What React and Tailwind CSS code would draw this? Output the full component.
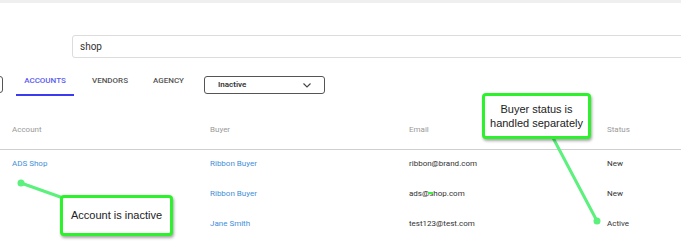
import React from "react";

const rows = [
  { account: "ADS Shop", buyer: "Ribbon Buyer", email: "ribbon@brand.com", status: "New" },
  { account: "", buyer: "Ribbon Buyer", email: "ads@shop.com", status: "New" },
  { account: "", buyer: "Jane Smith", email: "test123@test.com", status: "Active" },
];

const cols = "grid grid-cols-[198px_199px_198px_199px] w-[794px]";

const App = () => {
  return (
    <div className="relative w-[681px] h-[250px] overflow-hidden bg-white font-['Roboto',sans-serif]">
      {/* top strip */}
      <div className="h-[3px] bg-[#efefef]" />

      {/* search */}
      <div className="pt-[32px] pl-[72px]">
        <div className="flex items-center h-[23px] w-[700px] border border-[#dcdcdc] rounded-[3px] pl-[7px] text-[10px] text-[#333]">
          shop
        </div>
      </div>

      {/* tabs + filter */}
      <div className="flex items-start h-[21px] mt-[17px]">
        <div className="ml-[-17px] mt-[1px] w-[20px] h-[17px] border border-[#555] rounded-[3px]" />
        <div className="ml-[13px] w-[58px] h-[21px] border-b-[2px] border-[#3b3bf0] text-center text-[8px] font-medium leading-[12px] text-[#5a5cf0]">
          ACCOUNTS
        </div>
        <div className="ml-[18px] w-[61px] text-[8px] font-medium leading-[12px] text-[#555]">VENDORS</div>
        <div className="w-[51px] text-[8px] font-medium leading-[12px] text-[#555]">AGENCY</div>
        <div className="mt-[1px] flex items-center justify-between w-[121px] h-[18px] border border-[#555] rounded-[3px] pl-[13px] pr-[13px]">
          <span className="text-[8px] font-semibold text-[#333]">Inactive</span>
          <svg width="8" height="5" viewBox="0 0 8 5">
            <path d="M0.5 0.5 L4 4 L7.5 0.5" fill="none" stroke="#444" strokeWidth="1.1" />
          </svg>
        </div>
      </div>

      {/* table */}
      <div className="mt-[19px]">
        <div className={`${cols} h-[35px] border-b border-[#cfcfcf] text-[8px] text-[#9a9a9a] leading-[10px] pt-[10px]`}>
          <div className="pl-[12px]">Account</div>
          <div className="pl-[12px]">Buyer</div>
          <div className="pl-[12px]">Email</div>
          <div className="pl-[12px]">Status</div>
        </div>
        <div className="-mt-[1px]">
          {rows.map((r, i) => (
            <div key={i} className={`${cols} h-[30px] items-center text-[8px] leading-[10px]`}>
              <div className="pl-[12px] text-[#3f8fd8]">{r.account}</div>
              <div className="pl-[12px] text-[#3f8fd8]">{r.buyer}</div>
              <div className="pl-[12px] text-[#333]">{r.email}</div>
              <div className="pl-[12px] text-[#333]">{r.status}</div>
            </div>
          ))}
        </div>
      </div>

      {/* annotation pointers */}
      <svg className="absolute inset-0 pointer-events-none" width="681" height="250">
        <line x1="21" y1="183" x2="66" y2="199" stroke="#5cf07c" strokeWidth="3" strokeLinecap="round" />
        <circle cx="21" cy="183" r="3.5" fill="#5cf07c" />
        <line x1="551" y1="134" x2="597" y2="221" stroke="#5cf07c" strokeWidth="3" strokeLinecap="round" />
        <circle cx="597" cy="221" r="3.5" fill="#5cf07c" />
        <rect x="428" y="192" width="5" height="2" fill="#3cf04c" />
      </svg>

      {/* annotation boxes */}
      <div className="absolute left-[60px] top-[195px] w-[113px] h-[41px] flex items-center bg-white border-[3px] border-[#2cf22c] rounded-[4px] shadow-[1px_2px_3px_rgba(0,0,0,0.35)] pl-[8px] font-['Liberation_Sans',Arial,sans-serif] text-[11px] text-[#222]">
        Account is inactive
      </div>
      <div className="absolute left-[482px] top-[93px] w-[109px] h-[46px] flex items-center justify-center bg-white border-[3px] border-[#2cf22c] rounded-[4px] shadow-[1px_2px_3px_rgba(0,0,0,0.35)] text-center font-['Liberation_Sans',Arial,sans-serif] text-[11px] leading-[14px] text-[#222]">
        Buyer status is
        <br />
        handled separately
      </div>
    </div>
  );
};

export default App;
